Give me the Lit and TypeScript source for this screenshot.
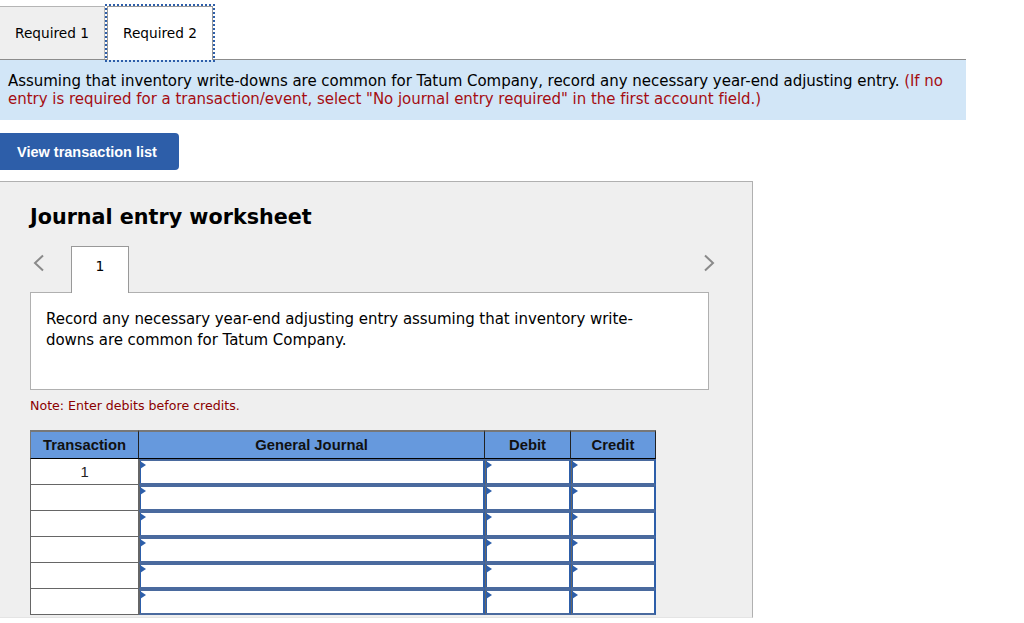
import { LitElement, html, css } from "lit";
import { customElement } from "lit/decorators.js";

const ROWS = ["1", "", "", "", "", ""];

@customElement("app-root")
export class AppRoot extends LitElement {
  static styles = css`
    :host {
      display: block;
      height: 623px;
      overflow: hidden;
      background: #fff;
      color: #000;
      font-family: "DejaVu Sans", Verdana, sans-serif;
      font-size: 15px;
    }
    .tabs {
      display: flex;
      gap: 2px;
      padding-top: 6px;
      height: 59px;
      box-sizing: border-box;
    }
    .tab {
      box-sizing: border-box;
      height: 53px;
      display: flex;
      align-items: center;
      justify-content: center;
      font-size: 13.7px;
    }
    .tab-off {
      width: 105px;
      background: #efefef;
      border-top: 1px solid #b5b5b5;
      border-right: 1px solid #b5b5b5;
    }
    .tab-on {
      width: 106px;
      height: 54px;
      padding-bottom: 1px;
      background: #fff;
      border: 1px solid #999;
      border-bottom: none;
      outline: 2px dotted #2d5ea9;
      outline-offset: 0;
      position: relative;
    }
    .info {
      box-sizing: border-box;
      width: 966px;
      height: 61px;
      padding: 12px 8px 0;
      background: #d2e6f7;
      border-top: 1px solid #8c8c8c;
      line-height: 18px;
      letter-spacing: -0.03px;
    }
    .red {
      color: #a50d12;
    }
    .view {
      display: flex;
      align-items: center;
      box-sizing: border-box;
      width: 179px;
      height: 37px;
      margin-top: 13px;
      padding-left: 17px;
      background: #2d5ea9;
      color: #fff;
      font-family: "Liberation Sans", Arial, sans-serif;
      font-size: 14.5px;
      font-weight: 700;
      white-space: nowrap;
      border-radius: 0 4px 4px 0;
    }
    .panel {
      box-sizing: border-box;
      width: 753px;
      height: 437px;
      margin-top: 11px;
      padding: 0 44px 0 30px;
      background: #efefef;
      border-top: 1px solid #b0b0b0;
      border-right: 1px solid #b0b0b0;
      border-bottom: 1px solid #e4e4e4;
    }
    .title {
      margin: 0;
      padding-top: 23px;
      font-size: 20.7px;
      line-height: 24px;
      font-weight: 700;
    }
    .nav {
      display: flex;
      align-items: flex-start;
      margin-top: 17px;
      height: 46px;
    }
    .chev {
      display: block;
      width: 14px;
      height: 18px;
      margin-top: 8px;
    }
    .chev-left {
      margin-left: 2px;
    }
    .chev-right {
      margin-left: auto;
      margin-right: -8px;
    }
    .step {
      box-sizing: border-box;
      width: 58px;
      height: 47px;
      margin-left: 25px;
      padding-top: 10px;
      background: #fff;
      border: 1px solid #999;
      border-bottom: none;
      text-align: center;
      font-size: 14px;
      line-height: 18px;
      position: relative;
    }
    .prompt {
      box-sizing: border-box;
      width: 679px;
      height: 98px;
      padding: 16px 15px 0;
      background: #fff;
      border: 1px solid #b0b0b0;
      line-height: 21px;
      letter-spacing: -0.05px;
    }
    .note {
      margin-top: 8px;
      color: #8b0000;
      font-size: 12.6px;
      line-height: 16px;
    }
    .journal {
      display: grid;
      grid-template-columns: 109px 346px 86px 85px;
      grid-template-rows: 29px repeat(6, 26px);
      width: 626px;
      margin-top: 16px;
      font-family: "Liberation Sans", Arial, sans-serif;
      font-size: 14.8px;
    }
    .head {
      display: flex;
      align-items: center;
      justify-content: center;
      box-sizing: border-box;
      background: #6699dd;
      color: #111;
      font-weight: 700;
      border-top: 2px solid #777;
      border-right: 1px solid #222;
      border-bottom: 1px solid #000;
    }
    .head:first-child {
      border-left: 1px solid #777;
    }
    .trans {
      display: flex;
      align-items: center;
      justify-content: center;
      box-sizing: border-box;
      background: #fff;
      color: #222;
      border-left: 1px solid #666;
      border-right: 1px solid #666;
      border-bottom: 1px solid #666;
    }
    .field {
      box-sizing: border-box;
      position: relative;
      background: #fff;
      border: 2px solid #2d5ea9;
      border-top-color: #4a6a9e;
      border-left: 1px solid #666;
      border-bottom-color: #4a6a9e;
      box-shadow: inset 1px 0 0 #2d5ea9;
    }
    .flag {
      position: absolute;
      left: 0;
      top: 0;
      width: 0;
      height: 0;
      border-left: 6px solid #2d5ea9;
      border-top: 4px solid transparent;
      border-bottom: 4px solid transparent;
    }
  `;

  render() {
    return html`
      <div class="tabs">
        <div class="tab tab-off">Required 1</div>
        <div class="tab tab-on">Required 2</div>
      </div>
      <div class="info">
        Assuming that inventory write-downs are common for Tatum Company, record any necessary year-end adjusting entry.
        <span class="red">(If no<br />entry is required for a transaction/event, select "No journal entry required" in the first account field.)</span>
      </div>
      <div class="view">View transaction list</div>
      <section class="panel">
        <h2 class="title">Journal entry worksheet</h2>
        <div class="nav">
          <svg class="chev chev-left" viewBox="0 0 14 18" fill="none" stroke="#8a8a8a" stroke-width="2">
            <path d="M11 1.5 3 9l8 7.5" />
          </svg>
          <div class="step">1</div>
          <svg class="chev chev-right" viewBox="0 0 14 18" fill="none" stroke="#8a8a8a" stroke-width="2">
            <path d="M3 1.5 11 9l-8 7.5" />
          </svg>
        </div>
        <div class="prompt">
          Record any necessary year-end adjusting entry assuming that inventory write-<br />downs are common for Tatum Company.
        </div>
        <div class="note">Note: Enter debits before credits.</div>
        <div class="journal">
          <div class="head">Transaction</div>
          <div class="head">General Journal</div>
          <div class="head">Debit</div>
          <div class="head">Credit</div>
          ${ROWS.map(
            (r) => html`
              <div class="trans">${r}</div>
              <div class="field"><span class="flag"></span></div>
              <div class="field"><span class="flag"></span></div>
              <div class="field"><span class="flag"></span></div>
            `
          )}
        </div>
      </section>
    `;
  }
}
